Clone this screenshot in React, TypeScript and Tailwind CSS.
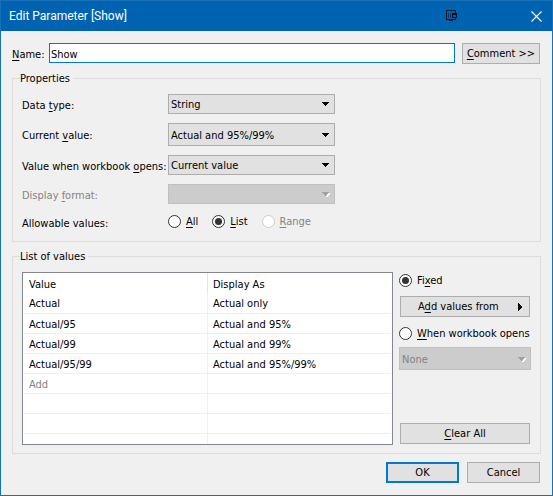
import { useState } from "react";
import type { ReactNode } from "react";

const rows: [string, string][] = [
  ["Actual", "Actual only"],
  ["Actual/95", "Actual and 95%"],
  ["Actual/99", "Actual and 99%"],
  ["Actual/95/99", "Actual and 95%/99%"],
  ["Add", ""],
  ["", ""],
  ["", ""],
];

function Key({ children }: { children: ReactNode }) {
  return <span className="underline decoration-1 underline-offset-2">{children}</span>;
}

function Combo({ id, value, disabled, size = "h-5", label }: { id: string; value: string; disabled?: boolean; size?: string; label?: string }) {
  return (
    <div className="relative flex w-full">
      <select
        id={id}
        aria-label={label}
        disabled={disabled}
        className={`${size} w-full appearance-none border border-[#adadad] bg-[#e1e1e1] pt-[2px] pr-5 pl-[2px] text-black opacity-100 outline-none disabled:border-[#bfbfbf] disabled:bg-[#cccccc] disabled:text-[#838383]`}
      >
        <option>{value}</option>
      </select>
      <svg className="pointer-events-none absolute top-1/2 right-[5px] -mt-[2px] h-[5px] w-[9px]" viewBox="0 0 9 5" shapeRendering="crispEdges" aria-hidden="true">
        {disabled && <path d="M5 5h1l3-3V1H7z" fill="#fff" />}
        <path d="M0 0h8L4 4z" fill={disabled ? "#a0a0a0" : "#000"} />
      </svg>
    </div>
  );
}

function Radio({ name, checked, disabled, onChange, children }: { name: string; checked?: boolean; disabled?: boolean; onChange?: () => void; children: ReactNode }) {
  return (
    <label className={`flex h-4 items-center gap-[5px] whitespace-nowrap ${disabled ? "text-[#838383]" : ""}`}>
      <input
        type="radio"
        name={name}
        checked={!!checked}
        disabled={disabled}
        onChange={onChange}
        className="flex size-[13px] shrink-0 appearance-none items-center justify-center rounded-full border border-[#333] bg-white before:size-[7px] before:rounded-full checked:before:bg-[#333] disabled:border-[#ccc]"
      />
      <span className="pt-[2px]">{children}</span>
    </label>
  );
}

const button = "h-[21px] border border-[#adadad] bg-[#e1e1e1] pt-px text-center leading-4";

export default function App() {
  const [allow, setAllow] = useState("list");
  const [source, setSource] = useState("fixed");
  return (
    <main className="flex min-h-screen flex-col border border-[#1a70b5] bg-[#f0f0f0] font-['DejaVu_Sans_Condensed','DejaVu_Sans',sans-serif] text-[11px] leading-4 text-black">
      <header className="flex h-[30px] items-center bg-[#0063b1] pl-2 text-white">
        <h1 className="flex-1 font-['Roboto',sans-serif] text-[12px]">Edit Parameter [Show]</h1>
        <svg className="mr-[73px] h-[12px] w-[12px]" viewBox="0 0 12 12" shapeRendering="crispEdges" aria-hidden="true">
          <path d="M.5 .5h9v9h-9z" fill="none" stroke="#05192b" />
          <path d="M2.5 3v5M4.5 3v5" stroke="#063a66" />
          <path d="M3 10h4v1H3zM6 3h5v5H6z" fill="#000b16" />
          <path d="M7 5h3v2H7z" fill="#0063b1" />
        </svg>
        <button type="button" aria-label="Close" className="mr-[10px] flex">
          <svg className="h-[11px] w-[11px]" viewBox="0 0 11 11" aria-hidden="true">
            <path d="M.5 .5l10 10M10.5 .5l-10 10" stroke="#fff" strokeWidth="1.1" />
          </svg>
        </button>
      </header>
      <form className="flex flex-1 flex-col px-3 pt-3 pl-[11px]" onSubmit={(e) => e.preventDefault()}>
        <div className="flex items-start">
          <label htmlFor="name" className="w-[37px] pt-1">
            <Key>N</Key>ame:
          </label>
          <input id="name" defaultValue="Show" className="h-5 min-w-0 flex-1 border border-[#0078d7] bg-white px-px pt-[2px] outline-none" />
          <button type="button" className={`${button} ml-[7px] w-[78px]`}>
            <Key>C</Key>omment &gt;&gt;
          </button>
        </div>

        <fieldset className="-mr-px mt-[6px] border border-[#dcdcdc] px-[9px] pb-[10px]">
          <legend className="-ml-[2px] h-4 pt-px pr-[3px]">Properties</legend>
          <div className="grid grid-cols-[146px_167px] items-center gap-y-[9px] pt-[8px]">
            <label htmlFor="type" className="pt-[3px]">Data <Key>t</Key>ype:</label>
            <Combo id="type" value="String" />
            <label htmlFor="current" className="pt-[2px]">Current <Key>v</Key>alue:</label>
            <Combo id="current" value="Actual and 95%/99%" size="h-[23px]" />
            <label htmlFor="opens" className="whitespace-nowrap pt-[3px]">Value when workbook <Key>o</Key>pens:</label>
            <Combo id="opens" value="Current value" />
            <label htmlFor="format" className="pt-[3px] text-[#838383]">Display <Key>f</Key>ormat:</label>
            <Combo id="format" value="" disabled />
            <span id="allow" className="h-4 pt-[2px]">Allowable values:</span>
            <div role="radiogroup" aria-labelledby="allow" className="flex h-[18px] gap-[14px]">
              <Radio name="allow" checked={allow === "all"} onChange={() => setAllow("all")}><Key>A</Key>ll</Radio>
              <Radio name="allow" checked={allow === "list"} onChange={() => setAllow("list")}><Key>L</Key>ist</Radio>
              <Radio name="allow" disabled><Key>R</Key>ange</Radio>
            </div>
          </div>
        </fieldset>

        <fieldset className="-mr-px mt-[6px] border border-[#dcdcdc] px-[9px] pb-2">
          <legend className="-ml-[2px] h-4 pt-px pr-[3px]">List of values</legend>
          <div className="flex gap-[6px] pt-[8px]">
            <div className="h-[173px] min-w-0 flex-1 overflow-hidden border border-[#828790] bg-white px-px">
              <table className="w-full table-fixed border-collapse text-left">
                <thead>
                  <tr className="h-5">
                    <th className="w-1/2 border-r border-[#e5e5e5] px-[5px] pt-[3px] font-normal">Value</th>
                    <th className="px-[5px] pt-[3px] font-normal">Display As</th>
                  </tr>
                </thead>
                <tbody>
                  {rows.map(([value, display], i) => (
                    <tr key={i} className="h-5 border-b border-[#f0f0f0]">
                      <td className={`border-r border-[#f0f0f0] px-[5px] pt-[3px] ${value === "Add" ? "text-[#838383]" : ""}`}>{value}</td>
                      <td className="px-[5px] pt-[3px]">{display}</td>
                    </tr>
                  ))}
                  <tr className="h-5">
                    <td className="border-r border-[#f0f0f0]" />
                    <td />
                  </tr>
                </tbody>
              </table>
            </div>
            <div className="flex w-[132px] shrink-0 flex-col">
              <Radio name="source" checked={source === "fixed"} onChange={() => setSource("fixed")}>Fi<Key>x</Key>ed</Radio>
              <button type="button" className={`${button} mx-px mt-2 flex items-center pr-[6px] pl-[17px]`}>
                <span className="flex-1 text-left">A<Key>d</Key>d values from</span>
                <svg className="h-[9px] w-[5px]" viewBox="0 0 5 9" shapeRendering="crispEdges" aria-hidden="true">
                  <path d="M0 0l4 4-4 4z" fill="#000" />
                </svg>
              </button>
              <div className="mt-2 mb-[6px]">
                <Radio name="source" checked={source === "workbook"} onChange={() => setSource("workbook")}><Key>W</Key>hen workbook opens</Radio>
              </div>
              <Combo id="field" label="Workbook field" value="None" size="h-[23px]" disabled />
              <button type="button" className={`${button} mx-px mt-auto mb-px`}><Key>C</Key>lear All</button>
            </div>
          </div>
        </fieldset>

        <div className="mt-2 mb-3 flex justify-end gap-2">
          <button type="submit" className="h-[21px] w-[73px] border-2 border-[#0078d7] bg-[#e1e1e1]">OK</button>
          <button type="button" className={`${button} w-[73px]`}>Cancel</button>
        </div>
      </form>
    </main>
  );
}
